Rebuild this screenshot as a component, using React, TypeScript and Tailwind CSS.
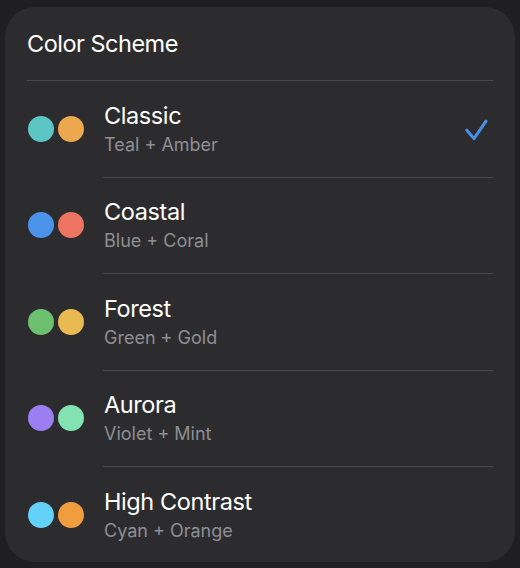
const schemes = [
  { name: "Classic", desc: "Teal + Amber", a: "bg-[#5cc6c4]", b: "bg-[#eda84f]", selected: true },
  { name: "Coastal", desc: "Blue + Coral", a: "bg-[#4b93ea]", b: "bg-[#ee7462]", selected: false },
  { name: "Forest", desc: "Green + Gold", a: "bg-[#6cc070]", b: "bg-[#e9ba52]", selected: false },
  { name: "Aurora", desc: "Violet + Mint", a: "bg-[#9a7ef2]", b: "bg-[#82e2b1]", selected: false },
  { name: "High Contrast", desc: "Cyan + Orange", a: "bg-[#64d2f8]", b: "bg-[#f09d40]", selected: false },
];

function Check() {
  return (
    <svg width="24" height="24" viewBox="0 0 24 24" fill="none" aria-hidden="true">
      <path
        d="M2.8 13.2L10 21.6L22 4.2"
        stroke="#4a90e8"
        strokeWidth={3}
        strokeLinecap="round"
        strokeLinejoin="round"
      />
    </svg>
  );
}

export default function App() {
  return (
    <div
      className="w-[520px] h-[568px] bg-[#1f1f21] pt-[7px] px-[5px] overflow-hidden"
      style={{ fontFamily: "Inter, 'Noto Sans', sans-serif" }}
    >
      <div className="h-[555px] rounded-[30px] bg-[#2c2c2e] overflow-hidden">
        <div className="h-[73px] px-[22px] flex items-center text-[23.5px] tracking-[-0.5px] text-white">
          Color Scheme
        </div>
        <div className="mx-[22px] h-px bg-[#48484a]" />

        {schemes.map((s, i) => (
          <div key={s.name}>
            {i > 0 && <div className="ml-[98px] mr-[22px] h-px bg-[#48484a]" />}
            <div className="h-[95.5px] flex items-center pl-[23px] pr-[27px]">
              <div className="flex gap-[4px]">
                <span className={`w-[26px] h-[26px] rounded-full ${s.a}`} />
                <span className={`w-[26px] h-[26px] rounded-full ${s.b}`} />
              </div>
              <div className="ml-[20px] flex-1 flex flex-col">
                <span className="text-[23.5px] leading-[28px] tracking-[-0.4px] text-white">{s.name}</span>
                <span className="mt-[4px] text-[18px] leading-[22px] text-[#8e8e93]">{s.desc}</span>
              </div>
              {s.selected && <Check />}
            </div>
          </div>
        ))}
      </div>
    </div>
  );
}
